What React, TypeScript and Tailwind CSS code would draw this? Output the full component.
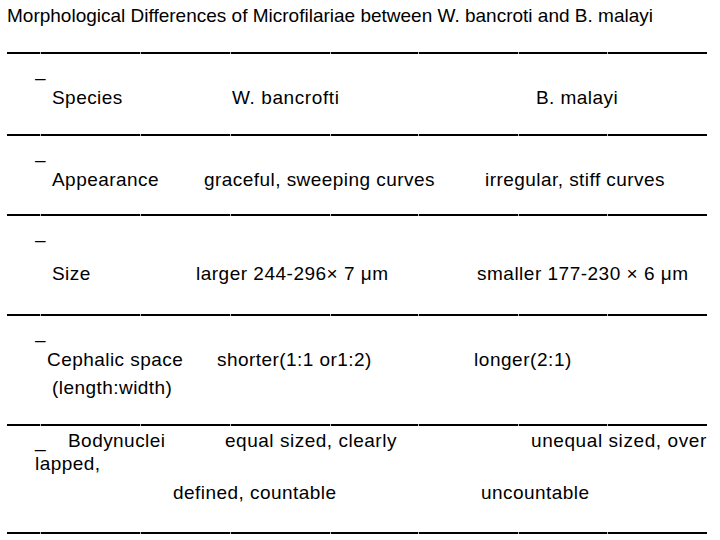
import React from "react";

function Rule() {
  return (
    <div className="ml-[7px] flex h-[2px] w-[700px] gap-[1px] bg-[#b8b8b8]">
      <div className="h-[2px] w-[33px] bg-black" />
      <div className="h-[2px] w-[99px] bg-black" />
      <div className="h-[2px] w-[89px] bg-black" />
      <div className="h-[2px] w-[99px] bg-black" />
      <div className="h-[2px] w-[87px] bg-black" />
      <div className="h-[2px] w-[99px] bg-black" />
      <div className="h-[2px] w-[88px] bg-black" />
      <div className="h-[2px] w-[99px] bg-black" />
    </div>
  );
}

function Dash() {
  return <div className="h-[20px] pl-[35px] leading-[20px]">–</div>;
}

export default function App() {
  return (
    <div
      className="flex h-[540px] w-[720px] flex-col overflow-hidden bg-white text-[19px] leading-[20px] text-black whitespace-nowrap"
      style={{ fontFamily: '"Liberation Sans", Arial, sans-serif' }}
    >
      <div className="h-[52px] pl-[7px] pt-[6px]">
        Morphological Differences of Microfilariae between W. bancroti and B. malayi
      </div>
      <Rule />
      <div className="h-[80px] pt-[14px] tracking-[0.45px]">
        <Dash />
        <div className="flex h-[20px] pl-[52px]">
          <span className="w-[180px] shrink-0">Species</span>
          <span className="w-[304px] shrink-0 tracking-[0.6px]">W. bancrofti</span>
          <span>B. malayi</span>
        </div>
      </div>
      <Rule />
      <div className="h-[78px] pt-[14px] tracking-[0.45px]">
        <Dash />
        <div className="flex h-[20px] pl-[52px]">
          <span className="w-[152px] shrink-0">Appearance</span>
          <span className="w-[281px] shrink-0">graceful, sweeping curves</span>
          <span>irregular, stiff curves</span>
        </div>
      </div>
      <Rule />
      <div className="h-[98px] pt-[14px] tracking-[0.45px]">
        <Dash />
        <div className="mt-[14px] flex h-[20px] pl-[52px]">
          <span className="w-[144px] shrink-0">Size</span>
          <span className="w-[281px] shrink-0 tracking-[0.5px]">larger 244-296× 7 μm</span>
          <span className="tracking-[0.5px]">smaller 177-230 × 6 μm</span>
        </div>
      </div>
      <Rule />
      <div className="h-[108px] pt-[14px] tracking-[0.45px]">
        <Dash />
        <div className="flex h-[20px] pl-[47px]">
          <span className="w-[170px] shrink-0">Cephalic space</span>
          <span className="w-[257px] shrink-0">shorter(1:1 or1:2)</span>
          <span className="tracking-[0.55px]">longer(2:1)</span>
        </div>
        <div className="mt-[8px] h-[20px] pl-[52px]">(length:width)</div>
      </div>
      <Rule />
      <div className="h-[106px] pt-[5px] tracking-[0.45px]">
        <div className="flex h-[20px] pl-[35px]">
          <span className="w-[33px] shrink-0">_</span>
          <span className="w-[157px] shrink-0">Bodynuclei</span>
          <span className="w-[306px] shrink-0 tracking-[0.52px]">equal sized, clearly</span>
          <span className="tracking-[0.58px]">unequal sized, over</span>
        </div>
        <div className="mt-[3px] h-[20px] pl-[35px]">lapped,</div>
        <div className="mt-[9px] flex h-[20px] pl-[173px]">
          <span className="w-[308px] shrink-0">defined, countable</span>
          <span>uncountable</span>
        </div>
      </div>
      <Rule />
    </div>
  );
}
